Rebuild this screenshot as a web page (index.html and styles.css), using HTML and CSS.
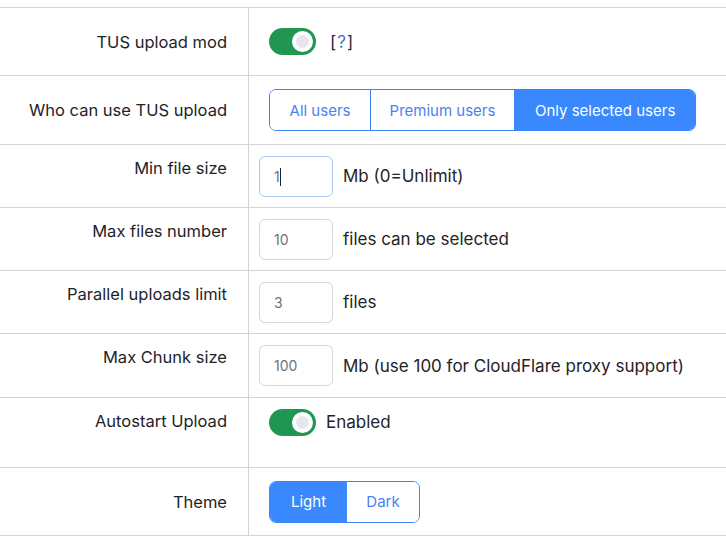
FILE: index.html
```html
<!DOCTYPE html>
<html lang="en">
<head>
<meta charset="utf-8">
<title>TUS upload settings</title>
<link rel="stylesheet" href="styles.css">
</head>
<body>
<div class="settings">
  <div class="row row-h67">
    <div class="label label-center">TUS upload mod</div>
    <div class="value value-center">
      <span class="switch"><span class="knob"></span></span>
      <span class="help">[<a href="#" class="help-link">?</a>]</span>
    </div>
  </div>
  <div class="row row-h68">
    <div class="label label-center">Who can use TUS upload</div>
    <div class="value value-center">
      <div class="btn-group">
        <span class="seg seg-w100">All users</span>
        <span class="seg seg-w144">Premium users</span>
        <span class="seg seg-active">Only selected users</span>
      </div>
    </div>
  </div>
  <div class="row row-h62">
    <div class="label label-top">Min file size</div>
    <div class="value value-center">
      <span class="num-wrap">
        <input class="num num-focus" type="text" value="1">
        <span class="caret"></span>
      </span>
      <span class="hint">Mb (0=Unlimit)</span>
    </div>
  </div>
  <div class="row row-h62">
    <div class="label label-top">Max files number</div>
    <div class="value value-center">
      <input class="num" type="text" value="10">
      <span class="hint">files can be selected</span>
    </div>
  </div>
  <div class="row row-h62">
    <div class="label label-top">Parallel uploads limit</div>
    <div class="value value-center">
      <input class="num" type="text" value="3">
      <span class="hint">files</span>
    </div>
  </div>
  <div class="row row-h63">
    <div class="label label-top">Max Chunk size</div>
    <div class="value value-center">
      <input class="num" type="text" value="100">
      <span class="hint">Mb (use 100 for CloudFlare proxy support)</span>
    </div>
  </div>
  <div class="row row-h69">
    <div class="label label-top">Autostart Upload</div>
    <div class="value value-top">
      <span class="switch"><span class="knob"></span></span>
      <span class="enabled">Enabled</span>
    </div>
  </div>
  <div class="row row-h67">
    <div class="label label-center">Theme</div>
    <div class="value value-center">
      <div class="btn-group">
        <span class="seg seg-active seg-w77">Light</span>
        <span class="seg seg-w73">Dark</span>
      </div>
    </div>
  </div>
</div>
</body>
</html>
```
FILE: styles.css
```css
* { box-sizing: border-box; }

body {
  margin: 0;
  background: #ffffff;
  font-family: Inter, "Noto Sans", "Liberation Sans", sans-serif;
  color: #1f2328;
  font-size: 16px;
}

.settings {
  margin-top: 7px;
  border-top: 1px solid #d3d3d8;
}

.row {
  display: grid;
  grid-template-columns: 249px 1fr;
  border-bottom: 1px solid #d3d3d8;
}

.row-h62 { height: 63px; }
.row-h63 { height: 64px; }
.row-h67 { height: 68px; }
.row-h68 { height: 69px; }
.row-h69 { height: 70px; }

.label {
  display: flex;
  justify-content: flex-end;
  padding-right: 21px;
  border-right: 1px solid #d3d3d8;
  font-size: 16.5px;
  line-height: 24px;
  white-space: nowrap;
}

.label-center { align-items: center; }
.label-top { align-items: flex-start; padding-top: 11px; }

.value {
  display: flex;
  padding-left: 10px;
}

.value-center { align-items: center; }
.value-top { align-items: flex-start; padding-top: 11px; }

.switch {
  position: relative;
  display: inline-block;
  width: 47px;
  height: 27px;
  margin-left: 10px;
  border-radius: 14px;
  background: #219653;
  flex: none;
}

.knob {
  position: absolute;
  top: 3px;
  right: 3px;
  width: 21px;
  height: 21px;
  border-radius: 50%;
  background: #e6e6ee;
  border: 4px solid #ffffff;
}

.help {
  margin-left: 14px;
  font-size: 17px;
  color: #2a2440;
}

.help-link {
  color: #3b6fd8;
  text-decoration: none;
  margin: 0 1px;
}

.enabled {
  margin-left: 10px;
  line-height: 27px;
  font-size: 17px;
}

.btn-group {
  display: flex;
  height: 42px;
  margin-left: 10px;
  border: 1px solid #3b86f7;
  border-radius: 7px;
  overflow: hidden;
}

.seg {
  display: flex;
  align-items: center;
  justify-content: center;
  padding: 0 20px;
  font-size: 15px;
  color: #4d7ff2;
  background: #ffffff;
  white-space: nowrap;
}

.seg + .seg { border-left: 1px solid #3b86f7; }

.seg-w100 { width: 100px; }
.seg-w144 { width: 144px; }
.seg-w77 { width: 77px; }
.seg-w73 { width: 72px; }

.seg-active {
  background: #3a88fd;
  color: #ffffff;
}

.seg-active + .seg { border-left: none; }

.num-wrap {
  position: relative;
  display: inline-flex;
}

.num {
  width: 74px;
  height: 41px;
  padding: 0 0 0 14px;
  border: 1px solid #d3d5db;
  border-radius: 6px;
  font-family: inherit;
  font-size: 14px;
  color: #6c737d;
  background: #ffffff;
  outline: none;
}

.num-focus { border-color: #a7c8fa; }

.caret {
  position: absolute;
  left: 21px;
  top: 12px;
  width: 1px;
  height: 18px;
  background: #1f2328;
}

.hint {
  margin-left: 10px;
  font-size: 17px;
  white-space: nowrap;
}
```
